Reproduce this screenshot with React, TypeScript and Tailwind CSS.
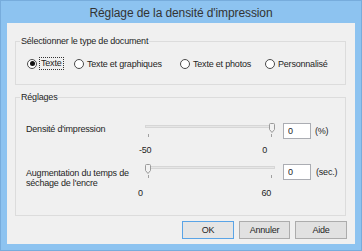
import React from "react";

const font = { fontFamily: '"Liberation Sans", Arial, sans-serif' };

// little slider thumb that points down, like the win8 trackbar
const Thumb = () => (
  <svg width="6" height="10" viewBox="0 0 6 10" className="block">
    <path
      d="M0.5 1.5 Q0.5 0.5 1.5 0.5 H4.5 Q5.5 0.5 5.5 1.5 V6.5 L3 9.5 L0.5 6.5 Z"
      fill="#f2f2f2"
      stroke="#9a9a9a"
      strokeWidth="1"
    />
  </svg>
);

interface SliderProps {
  thumbLeft: number;
}

const Slider = ({ thumbLeft }: SliderProps) => (
  <div className="relative h-[16px] w-[130px]">
    <div className="mt-[2px] h-[3px] w-full border border-[#d6d6d6] bg-[#e6e6e6]" />
    <div className="mt-[6px] flex justify-between pl-[3px] pr-[3px]">
      <div className="h-[3px] w-px bg-[#a0a0a0]" />
      <div className="h-[3px] w-px bg-[#a0a0a0]" />
    </div>
    <div className="absolute top-0" style={{ left: thumbLeft }}>
      <Thumb />
    </div>
  </div>
);

interface RadioProps {
  label: string;
  checked?: boolean;
  width: string;
}

const Radio = ({ label, checked = false, width }: RadioProps) => (
  <label className={`flex items-center ${width}`}>
    <span className="flex h-[10px] w-[10px] items-center justify-center rounded-full border border-[#4a4a4a] bg-white">
      {checked && <span className="h-[5px] w-[5px] rounded-full bg-[#111]" />}
    </span>
    {checked ? (
      <span className="ml-[2px] border border-dotted border-[#333] px-[1px] leading-[11px]">
        {label}
      </span>
    ) : (
      <span className="ml-[3px] leading-[12px]">{label}</span>
    )}
  </label>
);

export default function App() {
  return (
    <div
      className="flex h-[251px] w-[362px] flex-col border border-[#77acdc] bg-[#8dc3f0] text-[9px] tracking-[-0.2px] text-[#1e1e1e]"
      style={font}
    >
      <div className="h-[22px] text-center text-[12px] leading-[24px] tracking-[-0.1px] text-[#333]">
        Réglage de la densité d'impression
      </div>

      <div className="mx-[6px] flex h-[221px] flex-col bg-[#f0f0f0]">
        <fieldset className="ml-[8px] mt-[12px] w-[331px] border border-[#dcdcdc]">
          <legend className="ml-[4px] px-[1px] leading-[12px]">
            Sélectionner le type de document
          </legend>
          <div className="flex pb-[14px] pl-[11px] pt-[10px]">
            <Radio label="Texte" checked width="w-[47px]" />
            <Radio label="Texte et graphiques" width="w-[106px]" />
            <Radio label="Texte et photos" width="w-[85px]" />
            <Radio label="Personnalisé" width="w-[70px]" />
          </div>
        </fieldset>

        <fieldset className="ml-[8px] mt-[6px] w-[331px] border border-[#dcdcdc]">
          <legend className="ml-[4px] px-[1px] leading-[12px]">Réglages</legend>
          <div className="flex flex-col pb-[16px] pl-[10px]">
            <div className="mt-[20px] flex items-start">
              <div className="w-[119px] leading-[12px]">Densité d'impression</div>
              <div className="flex w-[130px] flex-col">
                <Slider thumbLeft={124} />
                <div className="-ml-[6px] mt-[5px] flex w-[128px] justify-between leading-[12px]">
                  <span>-50</span>
                  <span>0</span>
                </div>
              </div>
              <input
                readOnly
                value="0"
                className="ml-[8px] h-[16px] w-[28px] border border-[#abadb3] bg-white px-[4px] text-[9px] outline-none"
              />
              <span className="ml-[4px] leading-[16px]">(%)</span>
            </div>

            <div className="mt-[8px] flex items-start">
              <div className="mt-[4px] w-[119px] leading-[10px]">
                Augmentation du temps de
                <br />
                séchage de l'encre
              </div>
              <div className="flex w-[130px] flex-col">
                <Slider thumbLeft={0} />
                <div className="-ml-[7px] mt-[7px] flex w-[133px] justify-between leading-[12px]">
                  <span>0</span>
                  <span>60</span>
                </div>
              </div>
              <input
                readOnly
                value="0"
                className="ml-[8px] h-[16px] w-[28px] border border-[#abadb3] bg-white px-[4px] text-[9px] outline-none"
              />
              <span className="ml-[5px] leading-[16px]">(sec.)</span>
            </div>
          </div>
        </fieldset>

        <div className="mt-[5px] flex justify-end gap-[5px] pr-[8px]">
          <button className="h-[18px] w-[52px] border border-[#5aa4e6] bg-[#e5e5e5] leading-[16px]">
            OK
          </button>
          <button className="h-[18px] w-[51px] border border-[#acacac] bg-[#e1e1e1] leading-[16px]">
            Annuler
          </button>
          <button className="h-[18px] w-[52px] border border-[#acacac] bg-[#e1e1e1] leading-[16px]">
            Aide
          </button>
        </div>
      </div>
    </div>
  );
}
